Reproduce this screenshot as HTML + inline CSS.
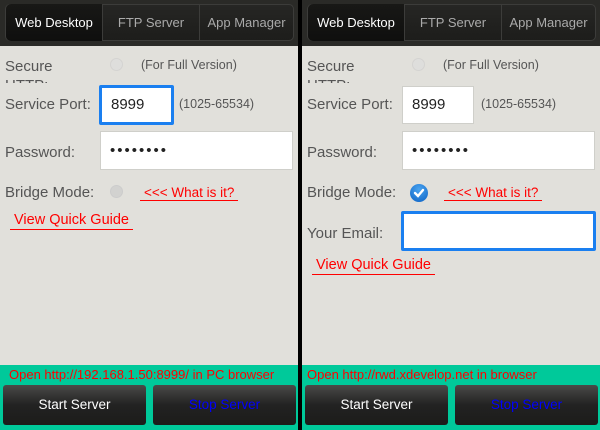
<!DOCTYPE html>
<html><head><style>
*{margin:0;padding:0;box-sizing:border-box}
body{width:600px;height:430px;background:#000;font-family:"Liberation Sans",sans-serif;position:relative;overflow:hidden}
.p{position:absolute;top:0;width:298px;height:430px;background:#e1e0db;overflow:hidden}
.tabs{position:absolute;left:0;top:0;width:100%;height:46px;background:#2a2a27;}
.tc{position:absolute;left:5px;top:4px;width:289px;height:37px;border:1px solid #3c3c3a;border-radius:5px;background:linear-gradient(#262624,#1d1d1b)}
.tab{position:absolute;top:4px;height:37px;color:#aaa;font-size:13px;text-align:center;line-height:37px;border-left:1px solid #3c3c3a}
.tab.a{background:linear-gradient(#181816,#0f0f0e);color:#fff;border-left:none;border-radius:5px 0 0 5px}
.l{position:absolute;font-size:15px;color:#555}
.s{position:absolute;font-size:12.5px;color:#555}
.in{position:absolute;background:#fff;border:1px solid #cfcfca;font-size:15px;color:#222;padding-left:9px}
.f{border:3px solid #1a7ff0;border-radius:2px}
.r{position:absolute;width:13px;height:13px;border-radius:50%;background:#ddd;border:1px solid #ccc}
.rg{position:absolute;font-size:13.5px;color:#f00;border-bottom:1.5px solid #f00;line-height:13px;padding:0 4px 1px}
.g{position:absolute;left:0;top:365px;width:100%;height:65px;background:#00c99a}
.gt{position:absolute;left:9px;top:2px;font-size:13px;color:#f00}
.b{position:absolute;top:20px;width:143px;height:40px;border-radius:3px;background:linear-gradient(#4a4a48,#222 50%,#1c1c1a);font-size:13.5px;text-align:center;line-height:40px}
</style></head><body>

<div class="p" style="left:0">
 <div class="tabs">
  <div class="tc"></div>
  <div class="tab a" style="left:6px;width:96px">Web Desktop</div>
  <div class="tab" style="left:102px;width:97px">FTP Server</div>
  <div class="tab" style="left:199px;width:94px">App Manager</div>
 </div>
 <div class="l" style="left:5px;top:57px;line-height:19px;height:26px;overflow:hidden">Secure<br>HTTP:</div>
 <div class="r" style="left:110px;top:58px;opacity:.6"></div>
 <div class="s" style="left:141px;top:58px">(For Full Version)</div>
 <div class="l" style="left:5px;top:96px">Service Port:</div>
 <div class="in f" style="left:99px;top:85px;width:75px;height:40px;line-height:34px">8999</div>
 <div class="s" style="left:179px;top:97px">(1025-65534)</div>
 <div class="l" style="left:5px;top:144px">Password:</div>
 <div class="in" style="left:100px;top:131px;width:193px;height:39px;line-height:37px;letter-spacing:2px">••••••••</div>
 <div class="l" style="left:5px;top:184px">Bridge Mode:</div>
 <div class="r" style="left:110px;top:185px;background:#d2d2d0"></div>
 <div class="rg" style="left:140px;top:186px">&lt;&lt;&lt; What is it?</div>
 <div class="rg" style="left:10px;top:213px;font-size:14.5px;line-height:15px">View Quick Guide</div>
 <div class="g">
  <div class="gt">Open http://192.168.1.50:8999/ in PC browser</div>
  <div class="b" style="left:3px;color:#fff">Start Server</div>
  <div class="b" style="left:153px;color:#00f">Stop Server</div>
 </div>
</div>

<div class="p" style="left:302px">
 <div class="tabs">
  <div class="tc"></div>
  <div class="tab a" style="left:6px;width:96px">Web Desktop</div>
  <div class="tab" style="left:102px;width:97px">FTP Server</div>
  <div class="tab" style="left:199px;width:94px">App Manager</div>
 </div>
 <div class="l" style="left:5px;top:57px;line-height:19px;height:26px;overflow:hidden">Secure<br>HTTP:</div>
 <div class="r" style="left:110px;top:58px;opacity:.6"></div>
 <div class="s" style="left:141px;top:58px">(For Full Version)</div>
 <div class="l" style="left:5px;top:96px">Service Port:</div>
 <div class="in" style="left:100px;top:86px;width:72px;height:38px;line-height:36px">8999</div>
 <div class="s" style="left:179px;top:97px">(1025-65534)</div>
 <div class="l" style="left:5px;top:144px">Password:</div>
 <div class="in" style="left:100px;top:131px;width:193px;height:39px;line-height:37px;letter-spacing:2px">••••••••</div>
 <div class="l" style="left:5px;top:184px">Bridge Mode:</div>
 <div style="position:absolute;left:108px;top:184px;width:18px;height:18px;border-radius:50%;background:radial-gradient(circle at 50% 30%,#4aa4f0,#0c62c4)">
  <svg width="18" height="18" viewBox="0 0 18 18"><path d="M5 9 L8 12 L13 6" stroke="#fff" stroke-width="2.4" fill="none" stroke-linecap="round"/></svg>
 </div>
 <div class="rg" style="left:142px;top:186px">&lt;&lt;&lt; What is it?</div>
 <div class="l" style="left:5px;top:225px">Your Email:</div>
 <div class="in f" style="left:99px;top:211px;width:195px;height:40px"></div>
 <div class="rg" style="left:10px;top:258px;font-size:14.5px;line-height:15px">View Quick Guide</div>
 <div class="g">
  <div class="gt" style="left:5px">Open http://rwd.xdevelop.net in browser</div>
  <div class="b" style="left:3px;color:#fff">Start Server</div>
  <div class="b" style="left:153px;color:#00f">Stop Server</div>
 </div>
</div>
</body></html>
